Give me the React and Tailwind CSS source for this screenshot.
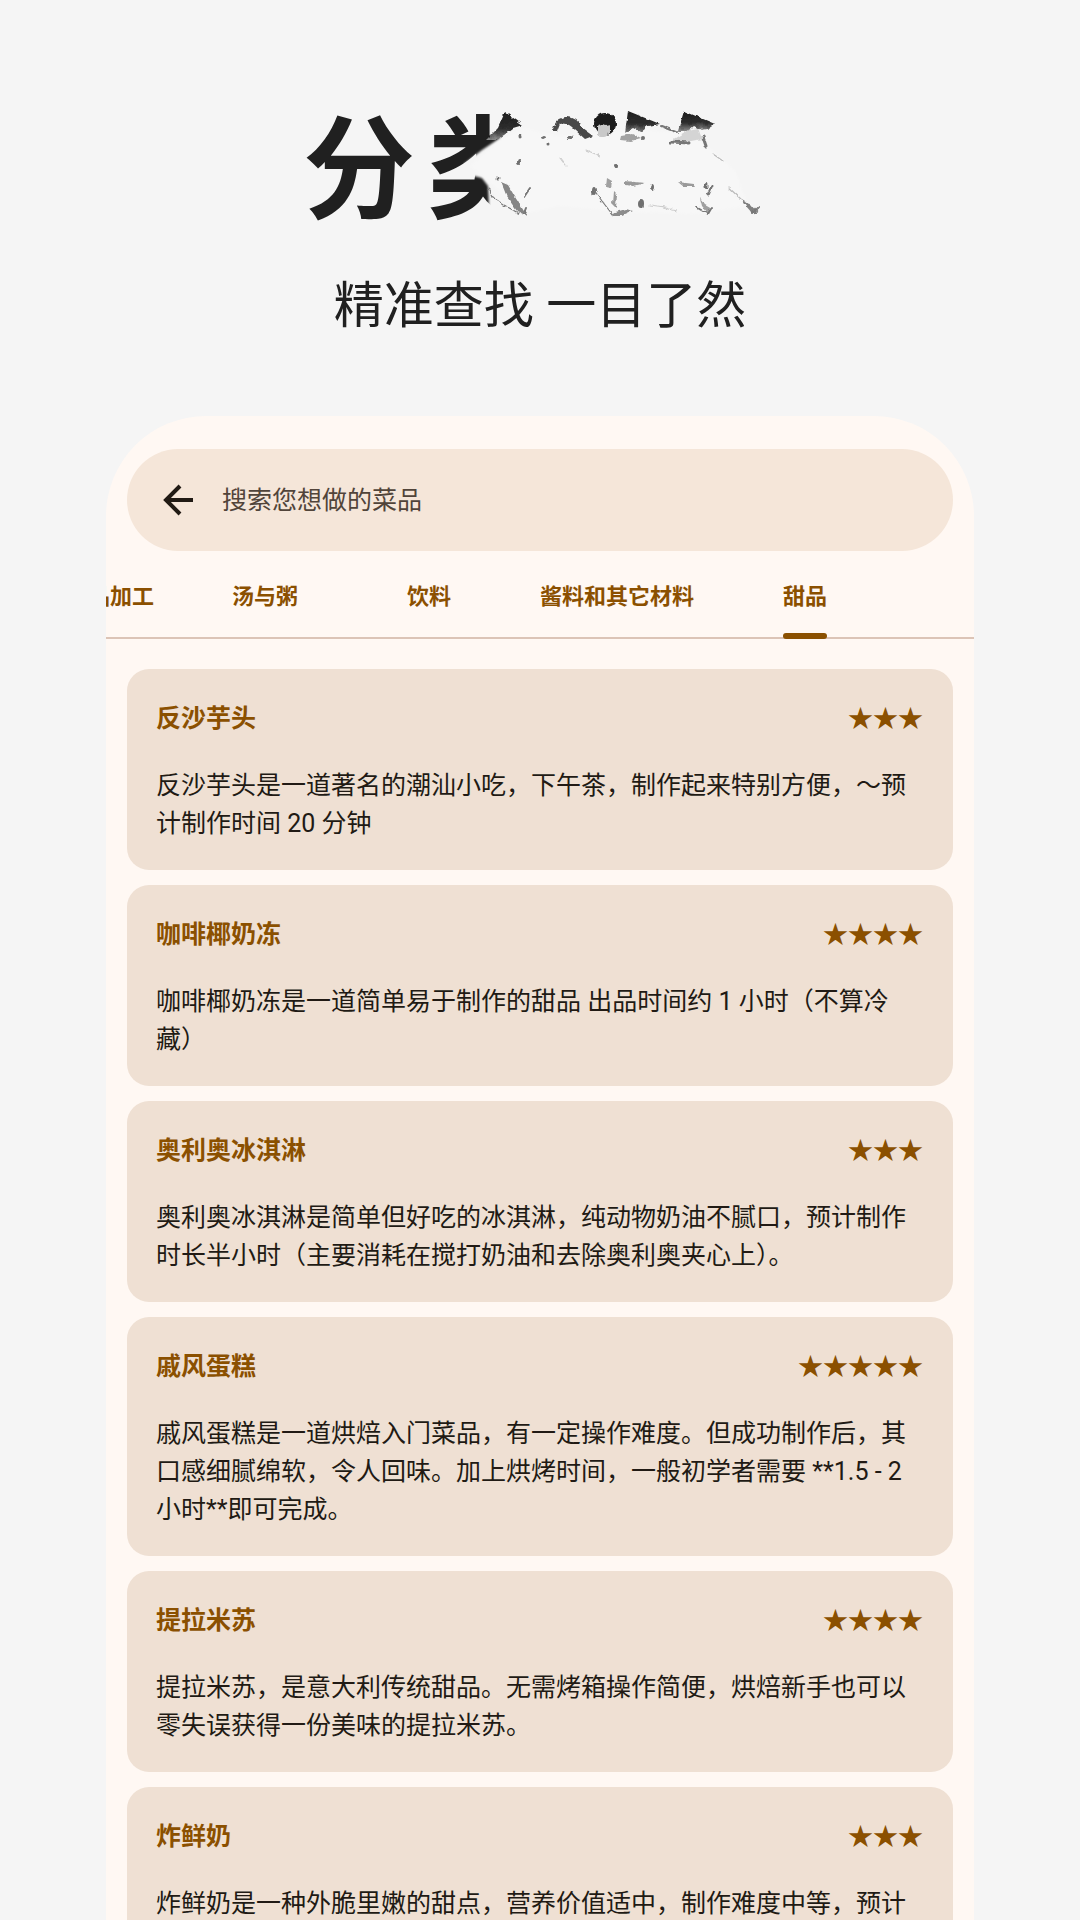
import React from 'react';

const tabs = ['半成品加工', '汤与粥', '饮料', '酱料和其它材料', '甜品'];
const activeTab = '甜品';

const recipes = [
  { name: '反沙芋头', stars: 3, desc: '反沙芋头是一道著名的潮汕小吃，下午茶，制作起来特别方便，～预计制作时间 20 分钟' },
  { name: '咖啡椰奶冻', stars: 4, desc: '咖啡椰奶冻是一道简单易于制作的甜品 出品时间约 1 小时（不算冷藏）' },
  { name: '奥利奥冰淇淋', stars: 3, desc: '奥利奥冰淇淋是简单但好吃的冰淇淋，纯动物奶油不腻口，预计制作时长半小时（主要消耗在搅打奶油和去除奥利奥夹心上）。' },
  { name: '戚风蛋糕', stars: 5, desc: '戚风蛋糕是一道烘焙入门菜品，有一定操作难度。但成功制作后，其口感细腻绵软，令人回味。加上烘烤时间，一般初学者需要 **1.5 - 2 小时**即可完成。' },
  { name: '提拉米苏', stars: 4, desc: '提拉米苏，是意大利传统甜品。无需烤箱操作简便，烘焙新手也可以零失误获得一份美味的提拉米苏。' },
  { name: '炸鲜奶', stars: 3, desc: '炸鲜奶是一种外脆里嫩的甜点，营养价值适中，制作难度中等，预计' },
];

// Ink wash that sweeps over the right part of the headline
const InkWash = () => (
  <svg viewBox="300 104 480 136" className="absolute inset-0 w-full h-full" aria-hidden="true">
    <defs>
      <filter id="soft" x="-10%" y="-10%" width="120%" height="120%">
        <feGaussianBlur stdDeviation="1.2" />
      </filter>
      <filter id="rough" x="-10%" y="-10%" width="120%" height="120%">
        <feTurbulence type="fractalNoise" baseFrequency="0.18" numOctaves="2" seed="4" result="noise" />
        <feDisplacementMap in="SourceGraphic" in2="noise" scale="4" xChannelSelector="R" yChannelSelector="G" />
        <feGaussianBlur stdDeviation="0.6" />
      </filter>
      <linearGradient id="ink" x1="0" y1="0" x2="0" y2="1">
        <stop offset="0" stopColor="#1c1c1c" />
        <stop offset="0.6" stopColor="#2e2e2e" />
        <stop offset="1" stopColor="#8a8a8a" />
      </linearGradient>
    </defs>

    {/* washed-out area */}
    <path
      d="M496 106H560V232H490L489 206L488 186L482 178L466 174L464 164L482 150L500 138L498 124Z"
      fill="#f5f5f5"
      filter="url(#soft)"
    />
    <path
      d="M470 166L500 140L524 128L556 136L620 130L690 132L712 150L736 172L748 206L700 214L620 212L560 206L524 214L494 186Z"
      fill="#f7f7f7"
      filter="url(#soft)"
    />

    <g filter="url(#rough)">
      {/* dark tops */}
      <path d="M505 112L523 125L513 128L504 135L496 140L486 140L498 128Z" fill="url(#ink)" />
      <path d="M553 132Q553 120 565 117Q577 116 582 128L593 136L585 139L575 130Q568 122 559 124L556 132Z" fill="#4a4a4a" />
      <circle cx="605" cy="124" r="11" fill="#1f1f1f" />
      <path d="M597 127Q600 122 605 125L610 124L610 133Q604 138 597 135Z" fill="#c9c9c9" />
      <path d="M628 111L660 124L648 126L640 132L633 128L625 133Z" fill="url(#ink)" />
      <path d="M684 111L715 124L708 129L701 130L694 126L688 131L678 131Z" fill="url(#ink)" />
      <path d="M688 130L698 128L702 139L680 143L672 140Z" fill="#d4d4d4" />

      {/* grey washes */}
      <path d="M501 182L508 185L515 197L522 208L527 216L517 211L507 197Z" fill="#858585" />
      <path d="M621 136L633 134L641 138L630 141L620 140Z" fill="#a2a2a2" />
      <path d="M625 181L645 183L634 186L625 185Z" fill="#9a9a9a" />
      <path d="M678 182L694 184L696 187L684 187Z" fill="#9a9a9a" />
      <path d="M607 178L612 181L611 188L606 187Z" fill="#a0a0a0" />
      <path d="M613 191L617 195L616 208L612 204Z" fill="#9a9a9a" />
      <path d="M612 213L626 209L633 211L622 216L613 216Z" fill="#8c8c8c" />
      <path d="M742 199L751 205L758 213L752 213L746 206Z" fill="#808080" />
      <path d="M700 198L705 204L712 208L708 213L702 206Z" fill="#a0a0a0" />

      {/* specks */}
      <g fill="#6f6f6f">
        <ellipse cx="520" cy="136" rx="1.5" ry="2.5" />
        <ellipse cx="519" cy="162" rx="2" ry="3" />
        <ellipse cx="570" cy="137" rx="3" ry="2" />
        <circle cx="543" cy="137" r="2" />
        <circle cx="548" cy="144" r="1.5" />
        <circle cx="643" cy="138" r="2" />
        <circle cx="616" cy="166" r="3" />
        <ellipse cx="594" cy="191" rx="2" ry="4" />
        <ellipse cx="652" cy="187" rx="2" ry="3" />
        <ellipse cx="641" cy="204" rx="3" ry="4" />
        <ellipse cx="706" cy="186" rx="1.5" ry="3" />
        <circle cx="498" cy="178" r="1.5" />
      </g>
    </g>

    {/* fine strokes */}
    <g fill="none" stroke="#777" strokeWidth="1.2" strokeLinecap="round" filter="url(#rough)">
      <path d="M489 188L494 198L504 205L520 214" strokeDasharray="5 2" />
      <path d="M530 188L524 197M526 208L524 213" strokeWidth="2" />
      <path d="M594 190L602 201L612 214" />
      <path d="M661 126L677 132" strokeWidth="2" />
      <path d="M671 142L689 143" strokeWidth="3" />
      <path d="M703 137L706 146" strokeWidth="3" />
      <path d="M713 154L723 161" stroke="#bbb" />
      <path d="M712 186L708 195" strokeWidth="3" />
      <path d="M696 207L708 214L712 207" strokeWidth="2" />
      <path d="M728 187L742 200" stroke="#bbb" />
      <path d="M753 213L759 207" strokeWidth="2" />
      <path d="M586 150L600 156M560 158L566 166M650 205L672 208M664 208L676 211" stroke="#ccc" />
    </g>
  </svg>
);

const App = () => {
  return (
    <div className="h-screen overflow-hidden bg-[#f5f5f5] font-[Roboto,'Noto_Sans_CJK_SC',sans-serif] text-[#211a14]">
      <header className="pt-[104px] pb-[74px] flex flex-col items-center text-[#202020]">
        <h1 className="relative w-[480px] pl-[3px] flex gap-3 text-[112px] leading-[136px] font-bold">
          <span>分</span>
          <span>类</span>
          <InkWash />
        </h1>
        <p className="mt-[30px] text-[50px] leading-[72px]">精准查找 一目了然</p>
      </header>

      <main className="mx-[106px] pt-[33px] rounded-t-[100px] bg-[#fff8f3] overflow-hidden">
        {/* Search bar */}
        <div className="mx-[21px] h-[102px] pl-[29px] pr-8 flex items-center gap-[22px] rounded-full bg-[#f5e6d9]">
          <button type="button" aria-label="返回">
            <svg viewBox="0 0 44 44" className="size-[44px]" fill="none" stroke="#211a14" strokeWidth="4">
              <path d="M37 22H10M24 8L10 22L24 36" />
            </svg>
          </button>
          <input
            type="text"
            aria-label="搜索"
            placeholder="搜索您想做的菜品"
            className="flex-1 min-w-0 pt-[2px] bg-transparent text-[25px] leading-[38px] outline-none placeholder:text-[#51443a]"
          />
        </div>

        {/* Category tabs */}
        <nav className="h-[88px] pr-[87px] flex justify-end border-b-2 border-[#dcc4b6] text-[22px] font-bold text-[#8b5000]">
          {tabs.map((tab) => (
            <button
              key={tab}
              type="button"
              className="min-w-[164px] px-[29px] pt-1 shrink-0 flex justify-center whitespace-nowrap"
            >
              <span className="relative h-full flex items-center">
                {tab}
                {tab === activeTab && (
                  <span className="absolute inset-x-0 -bottom-[2px] h-[6px] rounded-full bg-[#8b5000]"></span>
                )}
              </span>
            </button>
          ))}
        </nav>

        {/* Recipe cards */}
        <div className="px-[21px] pt-[30px] flex flex-col gap-[15px]">
          {recipes.map((recipe) => (
            <article key={recipe.name} className="pl-[29px] pr-[30px] pt-[31px] pb-[27px] rounded-[22px] bg-[#efe0d3] text-[25px] leading-[38px]">
              <div className="flex items-center justify-between font-bold text-[#8b5000]">
                <h2>{recipe.name}</h2>
                <span>{'★'.repeat(recipe.stars)}</span>
              </div>
              <p className="mt-[29px]">{recipe.desc}</p>
            </article>
          ))}
        </div>
      </main>
    </div>
  );
};

export default App;
